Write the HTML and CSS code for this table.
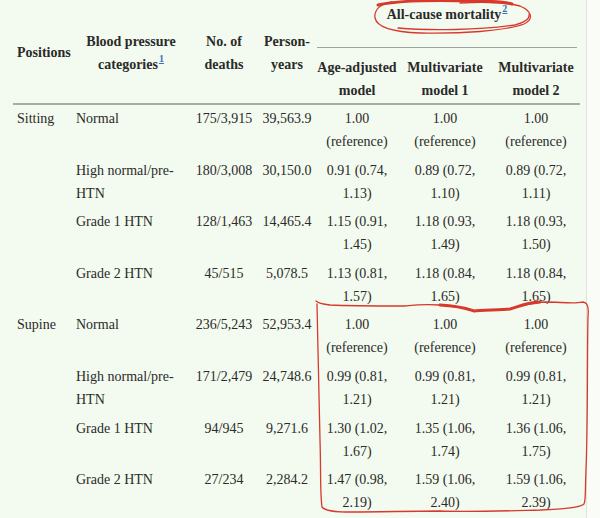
FILE: index.html
```html
<!DOCTYPE html>
<html lang="en">
<head>
<meta charset="utf-8">
<title>All-cause mortality by blood pressure category</title>
<link rel="stylesheet" href="styles.css">
</head>
<body>
<div class="panel">
  <table class="data">
    <colgroup>
      <col class="c-pos"><col class="c-bp"><col class="c-deaths"><col class="c-py">
      <col class="c-m0"><col class="c-m1"><col class="c-m2">
    </colgroup>
    <thead>
      <tr class="hr1">
        <th rowspan="2" class="left mid">Positions</th>
        <th rowspan="2" class="mid">Blood pressure categories<a class="fn" href="#fn1">1</a></th>
        <th rowspan="2" class="mid">No. of deaths</th>
        <th rowspan="2" class="mid">Person-years</th>
        <th colspan="3" class="group"><div class="group-label">All-cause mortality<a class="fn" href="#fn2">2</a></div></th>
      </tr>
      <tr class="hr2">
        <th>Age-adjusted model</th>
        <th>Multivariate model 1</th>
        <th>Multivariate model 2</th>
      </tr>
    </thead>
    <tbody>
      <tr><td rowspan="4" class="left">Sitting</td><td class="left">Normal</td><td>175/3,915</td><td>39,563.9</td><td>1.00 (reference)</td><td>1.00 (reference)</td><td>1.00 (reference)</td></tr>
      <tr><td class="left">High normal/pre-HTN</td><td>180/3,008</td><td>30,150.0</td><td>0.91 (0.74, 1.13)</td><td>0.89 (0.72, 1.10)</td><td>0.89 (0.72, 1.11)</td></tr>
      <tr><td class="left">Grade 1 HTN</td><td>128/1,463</td><td>14,465.4</td><td>1.15 (0.91, 1.45)</td><td>1.18 (0.93, 1.49)</td><td>1.18 (0.93, 1.50)</td></tr>
      <tr><td class="left">Grade 2 HTN</td><td>45/515</td><td>5,078.5</td><td>1.13 (0.81, 1.57)</td><td>1.18 (0.84, 1.65)</td><td>1.18 (0.84, 1.65)</td></tr>
      <tr><td rowspan="4" class="left">Supine</td><td class="left">Normal</td><td>236/5,243</td><td>52,953.4</td><td>1.00 (reference)</td><td>1.00 (reference)</td><td>1.00 (reference)</td></tr>
      <tr><td class="left">High normal/pre-HTN</td><td>171/2,479</td><td>24,748.6</td><td>0.99 (0.81, 1.21)</td><td>0.99 (0.81, 1.21)</td><td>0.99 (0.81, 1.21)</td></tr>
      <tr><td class="left">Grade 1 HTN</td><td>94/945</td><td>9,271.6</td><td>1.30 (1.02, 1.67)</td><td>1.35 (1.06, 1.74)</td><td>1.36 (1.06, 1.75)</td></tr>
      <tr><td class="left">Grade 2 HTN</td><td>27/234</td><td>2,284.2</td><td>1.47 (0.98, 2.19)</td><td>1.59 (1.06, 2.40)</td><td>1.59 (1.06, 2.39)</td></tr>
    </tbody>
  </table>
</div>
<svg class="marks" width="600" height="518" viewBox="0 0 600 518" aria-hidden="true">
  <path class="ink" d="M392 2 C380 4 374 10 375 18 C377 27 392 32 420 33 C460 34 505 31 524 24 C534 19 532 11 520 6 C505 2 480 2 460 3"/>
  <path class="ink thick" d="M378 5 C395 1 430 0 470 1 C490 1 505 2 512 4"/>
  <path class="ink" d="M398 28 C430 31 480 30 515 25 C526 22 530 18 529 14"/>
  <path class="ink" d="M316 301 C318 303 322 304 330 305 C350 306 380 306 405 306 C415 305 420 304 440 305 C460 306 468 309 474 311 C480 310 500 310 510 309 C518 307 525 303 545 302 C560 302 575 304 582 302 C587 302 589 306 588 316 C587 360 588 420 586 470 C585 490 586 500 584 504 C580 508 560 509 540 510 C500 511 470 512 440 511 C410 511 380 512 352 512 C334 512 325 511 322 507 C320 495 321 470 320 440 C319 400 318 350 317 304"/>
  <path class="ink thick" d="M440 305 C460 306 468 309 474 311 C480 310 500 310 510 309 C518 307 524 303 540 302"/>
</svg>
</body>
</html>
```
FILE: styles.css
```css
html, body {
  margin: 0;
  padding: 0;
}
body {
  background: #f9fcf7;
  font-family: "Liberation Serif", "Times New Roman", serif;
  font-size: 14px;
  color: #2a2a2a;
  width: 600px;
  height: 518px;
  overflow: hidden;
  position: relative;
}
.panel {
  width: 587px;
  min-height: 518px;
  background: #f3faef;
  border-right: 1px solid #dde3d9;
  box-sizing: border-box;
}
.data {
  margin-left: 13px;
  width: 567px;
  table-layout: fixed;
  border-collapse: collapse;
  line-height: 23px;
}
.c-pos { width: 59px; }
.c-bp { width: 118px; }
.c-deaths { width: 68px; }
.c-py { width: 58px; }
.c-m0 { width: 82px; }
.c-m1 { width: 94px; }
.c-m2 { width: 88px; }

th {
  font-weight: bold;
  text-align: center;
  padding: 0 1px;
}
th.left { text-align: left; padding-left: 4px; }
th.mid { vertical-align: middle; padding-top: 2px; }
.hr1 th { border-bottom: 2px solid #a8ada4; }
.hr1 th.group { border-bottom: none; padding: 0; vertical-align: top; height: 48px; }
.group-label {
  padding-top: 3px;
  height: 44px;
  margin: 0 3px 0 1px;
  border-bottom: 1px solid #9ea39b;
  text-align: center;
}
.hr2 th {
  padding-top: 8px;
  padding-bottom: 1px;
  vertical-align: top;
  border-bottom: 2px solid #a8ada4;
}
td {
  text-align: center;
  vertical-align: top;
  padding: 2px 1px 3.6px;
}
td:nth-last-child(-n+3) {
  padding-left: 7px;
  padding-right: 7px;
}
td.left { text-align: left; padding-left: 4px; }
.fn {
  color: #3b6fb6;
  text-decoration: underline;
  font-size: 10px;
  vertical-align: 7px;
  line-height: 0;
  margin-left: 1px;
}
.marks {
  position: absolute;
  left: 0;
  top: 0;
  pointer-events: none;
}
.ink {
  fill: none;
  stroke: #d9382d;
  stroke-width: 1.3;
  stroke-linecap: round;
  stroke-linejoin: round;
}
.ink.thick { stroke-width: 3; }
```
